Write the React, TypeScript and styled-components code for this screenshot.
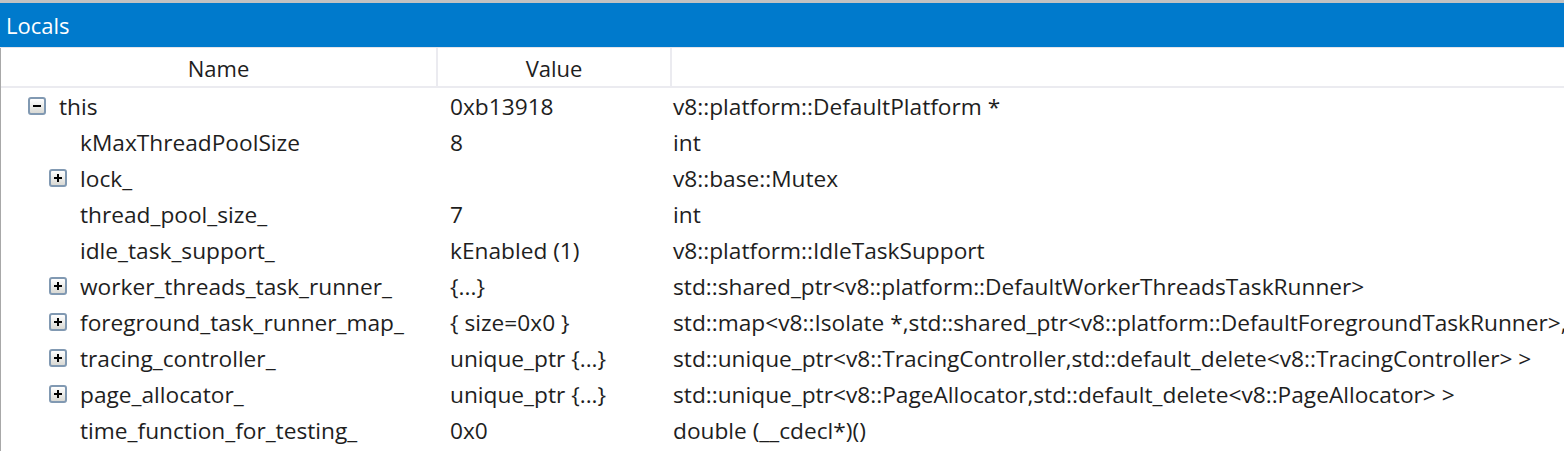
import React from "react";
import styled, { createGlobalStyle } from "styled-components";

const Global = createGlobalStyle`
  html, body { margin: 0; padding: 0; background: #ffffff; }
  body { font-family: "Open Sans", "Liberation Sans", Arial, sans-serif; overflow: hidden; }
`;

const Panel = styled.div`
  width: 1564px;
  height: 451px;
  border-top: 3px solid #c2c2c2;
  box-sizing: border-box;
  overflow: hidden;
  display: flex;
  flex-direction: column;
`;

const TitleBar = styled.div`
  height: 44px;
  background: #007acc;
  color: #ffffff;
  font-size: 22px;
  display: flex;
  align-items: center;
  padding-left: 6px;
  border-bottom: 1px solid #e4e4ea;
`;

const Body = styled.div`
  flex: 1;
  border-left: 1px solid #a8a8a8;
  display: flex;
  flex-direction: column;
  overflow: hidden;
`;

const Grid = styled.div`
  display: grid;
  grid-template-columns: 437px 234px 1fr;
`;

const HeaderRow = styled(Grid)`
  height: 38px;
  border-bottom: 2px solid #ebebf0;
`;

const HeaderCell = styled.div<{ $last?: boolean }>`
  display: flex;
  align-items: center;
  justify-content: center;
  font-size: 22px;
  color: #1e1e1e;
  border-right: ${(p) => (p.$last ? "none" : "2px solid #ebebf0")};
  padding-top: 1px;
`;

const Row = styled(Grid)`
  height: 36px;
  align-items: center;
  font-size: 22.7px;
  color: #1e1e1e;
  white-space: nowrap;
`;

const NameCell = styled.div<{ $level: number }>`
  display: flex;
  align-items: center;
  padding-left: ${(p) => 27 + p.$level * 21}px;
  overflow: hidden;
`;

const ExpanderSlot = styled.span`
  width: 31px;
  flex: none;
  display: flex;
  align-items: center;
`;

const Expander = styled.span`
  width: 14px;
  height: 14px;
  border: 2px solid #8199b2;
  border-radius: 3px;
  background: linear-gradient(#ffffff, #d9d9d4);
  position: relative;
  box-sizing: content-box;
  &::before {
    content: "";
    position: absolute;
    left: 3px;
    right: 3px;
    top: 6px;
    height: 2px;
    background: #000;
  }
`;

const PlusExpander = styled(Expander)`
  &::after {
    content: "";
    position: absolute;
    top: 3px;
    bottom: 3px;
    left: 6px;
    width: 2px;
    background: #000;
  }
`;

const ValueCell = styled.div`
  padding-left: 12px;
  overflow: hidden;
`;

const TypeCell = styled.div`
  padding-left: 1px;
  overflow: hidden;
`;

type Item = {
  name: string;
  value: string;
  type: string;
  level: number;
  exp?: "open" | "closed";
};

const items: Item[] = [
  { name: "this", value: "0xb13918", type: "v8::platform::DefaultPlatform *", level: 0, exp: "open" },
  { name: "kMaxThreadPoolSize", value: "8", type: "int", level: 1 },
  { name: "lock_", value: "", type: "v8::base::Mutex", level: 1, exp: "closed" },
  { name: "thread_pool_size_", value: "7", type: "int", level: 1 },
  { name: "idle_task_support_", value: "kEnabled (1)", type: "v8::platform::IdleTaskSupport", level: 1 },
  { name: "worker_threads_task_runner_", value: "{...}", type: "std::shared_ptr<v8::platform::DefaultWorkerThreadsTaskRunner>", level: 1, exp: "closed" },
  { name: "foreground_task_runner_map_", value: "{ size=0x0 }", type: "std::map<v8::Isolate *,std::shared_ptr<v8::platform::DefaultForegroundTaskRunner>,", level: 1, exp: "closed" },
  { name: "tracing_controller_", value: "unique_ptr {...}", type: "std::unique_ptr<v8::TracingController,std::default_delete<v8::TracingController> >", level: 1, exp: "closed" },
  { name: "page_allocator_", value: "unique_ptr {...}", type: "std::unique_ptr<v8::PageAllocator,std::default_delete<v8::PageAllocator> >", level: 1, exp: "closed" },
  { name: "time_function_for_testing_", value: "0x0", type: "double (__cdecl*)()", level: 1 },
];

export default function App() {
  return (
    <>
      <Global />
      <Panel>
        <TitleBar>Locals</TitleBar>
        <Body>
          <HeaderRow>
            <HeaderCell>Name</HeaderCell>
            <HeaderCell>Value</HeaderCell>
            <HeaderCell $last />
          </HeaderRow>
          {items.map((it) => (
            <Row key={it.name}>
              <NameCell $level={it.level}>
                <ExpanderSlot>
                  {it.exp === "open" && <Expander />}
                  {it.exp === "closed" && <PlusExpander />}
                </ExpanderSlot>
                {it.name}
              </NameCell>
              <ValueCell>{it.value}</ValueCell>
              <TypeCell>{it.type}</TypeCell>
            </Row>
          ))}
        </Body>
      </Panel>
    </>
  );
}
